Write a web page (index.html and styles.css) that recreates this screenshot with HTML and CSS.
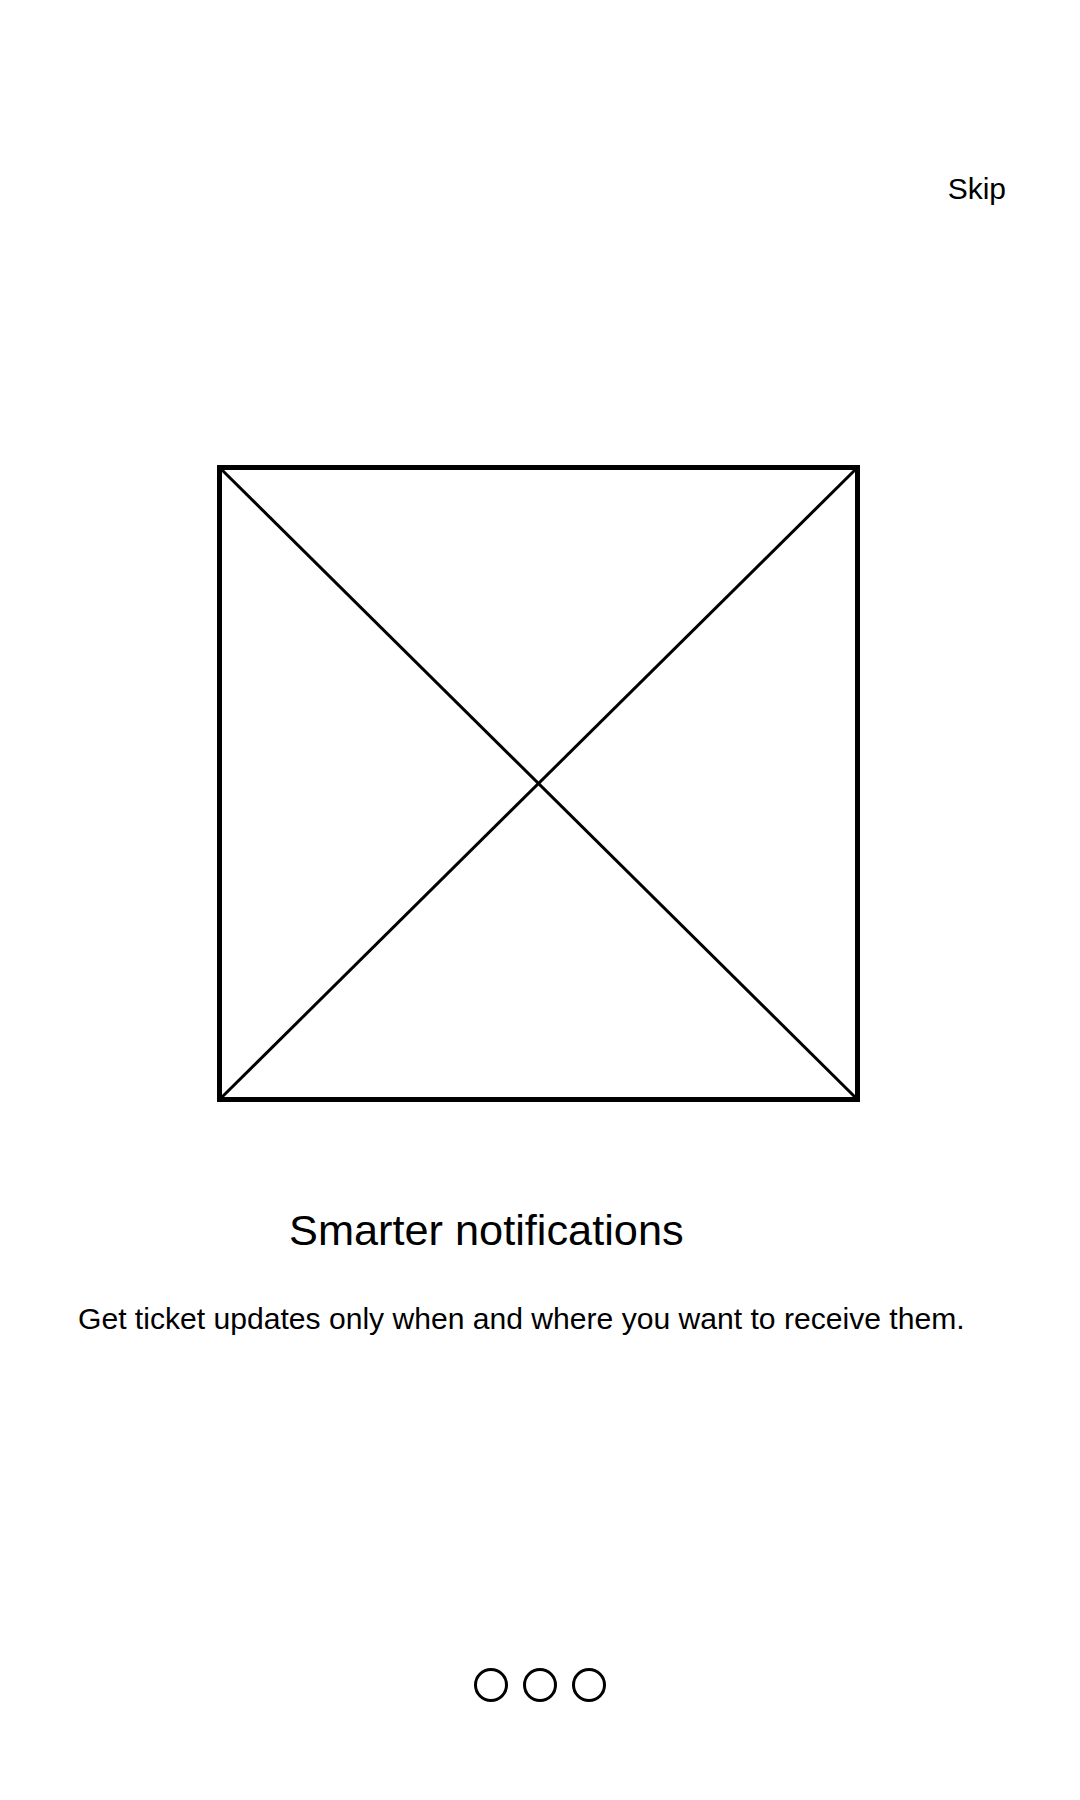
FILE: index.html
```html
<!DOCTYPE html>
<html lang="en">
<head>
    <meta charset="UTF-8">
    <meta name="viewport" content="width=device-width, initial-scale=1.0">
    <title>Onboarding</title>
    <link rel="stylesheet" href="styles.css">
</head>
<body>
    <div class="screen">
        <div class="top-bar">
            <span class="skip">Skip</span>
        </div>
        <div class="placeholder">
            <svg width="643" height="637" viewBox="0 0 643 637">
                <line x1="2.5" y1="2.5" x2="640.5" y2="634.5" stroke="#000" stroke-width="3"/>
                <line x1="640.5" y1="2.5" x2="2.5" y2="634.5" stroke="#000" stroke-width="3"/>
                <rect x="2.5" y="2.5" width="638" height="632" fill="none" stroke="#000" stroke-width="5"/>
            </svg>
        </div>
        <div class="title">Smarter notifications</div>
        <div class="subtitle">Get ticket updates only when and where you want to receive them.</div>
        <div class="dots">
            <span class="dot"></span>
            <span class="dot"></span>
            <span class="dot"></span>
        </div>
    </div>
</body>
</html>
```

FILE: styles.css
```css
body {
    margin: 0;
    background-color: #fff;
    font-family: 'Liberation Sans', Arial, sans-serif;
    color: #000;
}

.screen {
    display: flex;
    flex-direction: column;
    width: 1080px;
    height: 1800px;
}

.top-bar {
    display: flex;
    justify-content: flex-end;
    padding: 174px 74px 0 0;
}

.skip {
    font-size: 30px;
    line-height: 1;
}

.placeholder {
    display: flex;
    margin-top: 261px;
    padding-left: 217px;
}

.placeholder svg {
    display: block;
}

.title {
    margin-top: 107px;
    padding-left: 289px;
    font-size: 43.3px;
    line-height: 1;
}

.subtitle {
    margin-top: 52px;
    padding-left: 78px;
    font-size: 30.1px;
    line-height: 1;
}

.dots {
    display: flex;
    justify-content: center;
    gap: 15px;
    margin-top: 334px;
}

.dot {
    width: 28px;
    height: 28px;
    border: 3px solid #000;
    border-radius: 50%;
}
```
